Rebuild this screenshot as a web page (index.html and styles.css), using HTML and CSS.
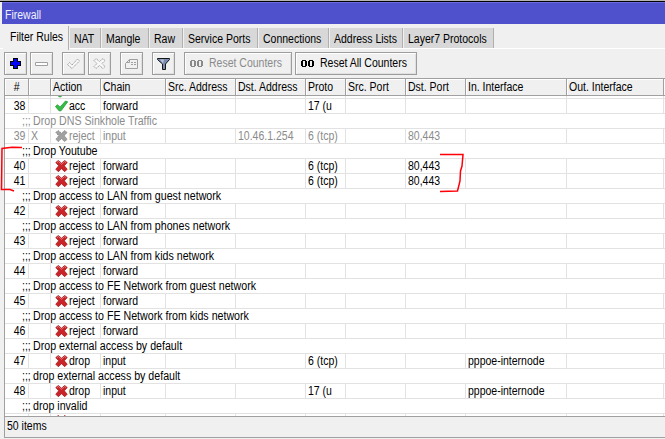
FILE: index.html
```
<!DOCTYPE html>
<html lang="en">
<head>
<meta charset="utf-8">
<title>Firewall</title>
<link rel="stylesheet" href="styles.css">
</head>
<body>
<svg class="defs" width="0" height="0">
  <symbol id="cross" viewBox="0 0 13 12"><path d="M.8 2.500 3.300.5 6.500 3.200 9.700.5 12.200 2.500 9.300 5.800 12.200 9.200 9.700 11.700 6.500 8.700 3.300 11.700.8 9.200 3.700 5.800Z" fill="#c92428" stroke="#a8171c" stroke-width=".8"/><path d="M2 2.700 3.500 1.500 6.500 4.300 9.500 1.500 11 2.700" fill="none" stroke="#e58a8c" stroke-width=".8"/></symbol>
  <symbol id="crossgray" viewBox="0 0 13 12"><path d="M.8 2.500 3.300.5 6.500 3.200 9.700.5 12.200 2.500 9.300 5.800 12.200 9.200 9.700 11.700 6.500 8.700 3.300 11.700.8 9.200 3.700 5.800Z" fill="#a0a0a0" stroke="#888" stroke-width=".9" stroke-dasharray="1.500 1"/></symbol>
  <symbol id="ok" viewBox="0 0 13 12"><path d="M.5 6.500 2.500 4.700 5 7.200 10.500 1 12.700 1.800 6 10.800 4 10.800Z" fill="#35bd45" stroke="#1f9c30" stroke-width=".8"/></symbol>
  <symbol id="zeros" viewBox="0 0 13 7"><path d="M1 0h4v1h1v5h-1v1h-4v-1h-1v-5h1ZM2 1v5h2v-5ZM8 0h4v1h1v5h-1v1h-4v-1h-1v-5h1ZM9 1v5h2v-5Z" fill="currentColor" fill-rule="evenodd" shape-rendering="crispEdges"/></symbol>
</svg>
<div class="outer"></div>
<div class="title"><span>Firewall</span></div>
<nav class="tabs">
  <div class="tab on t1"><span>Filter Rules</span></div><div class="tab t2"><span>NAT</span></div><div class="tab t3"><span>Mangle</span></div><div class="tab t4"><span>Raw</span></div><div class="tab t5"><span>Service Ports</span></div><div class="tab t6"><span>Connections</span></div><div class="tab t7"><span>Address Lists</span></div><div class="tab t8"><span>Layer7 Protocols</span></div>
</nav>
<div class="tools">
  <button class="btn"><svg width="13" height="13" shape-rendering="crispEdges"><path d="M4 1h5v3h3v5h-3v3h-5v-3h-3v-5h3Z" fill="#000"/><path d="M5 2h3v3h3v3h-3v3h-3v-3h-3v-3h3Z" fill="#0000ff"/></svg></button>
  <button class="btn g1"><svg width="13" height="13"><path d="M.5 5.500h12v3h-12Z" fill="#fff" stroke="#a0a0a0"/></svg></button>
  <button class="btn g2"><svg width="13" height="13"><path d="M.5 7.500 2.500 5.500 5 8 10.500 2 12.500 4 5 11.500Z" fill="#f8f8f8" stroke="#a0a0a0" stroke-dasharray="1.500 .6"/></svg></button>
  <button class="btn g1"><svg width="13" height="13"><path d="M1 3.500 3 1.500 6.500 4.500 10 1.500 12 3.500 9 6.500 12 9.500 10 11.500 6.500 8.500 3 11.500 1 9.500 4 6.500Z" fill="#f8f8f8" stroke="#a0a0a0" stroke-dasharray="1.500 .6"/></svg></button>
  <button class="btn g2"><svg width="13" height="13"><path d="M4.500 2.500h8v9h-12v-5ZM4.500 2.500v3h-3M6 5.500h2M9 5.500h2M6 7.500h2M9 7.500h2" fill="none" stroke="#a0a0a0"/></svg></button>
  <button class="btn g2"><svg width="13" height="13"><path d="M.5 1.500h12v1l-4 4.500v5.500h-3v-5.500l-5-4.500Z" fill="#788aad" stroke="#151515"/><path d="M3 2.500h4l-1 4Z" fill="#b4c2da"/></svg></button>
  <button class="btn wide off"><svg class="zz"><use href="#zeros"/></svg><span>Reset Counters</span></button>
  <button class="btn wide all"><svg class="zz"><use href="#zeros"/></svg><span>Reset All Counters</span></button>
</div>
<main class="table">
  <div class="row head"><i><span>#</span></i><i></i><i><span>Action</span></i><i><span>Chain</span></i><i><span>Src. Address</span></i><i><span>Dst. Address</span></i><i><span>Proto</span></i><i><span>Src. Port</span></i><i><span>Dst. Port</span></i><i><span>In. Interface</span></i><i><span>Out. Interface</span></i><i></i></div>
  <div class="rows" id="rows"></div>
  <footer><span>50 items</span></footer>
</main>
<svg class="marks" width="665" height="439"><path d="M22 147.500 12 147.200 2 148.500 1.500 189.500 10 189.500 14 191M440 154.500H463L462 166 460.500 171 460 181 457.500 191 440 191.500" fill="none" stroke="#ff0009" stroke-width="1.500"/></svg>
<script src="rows.js"></script>
</body>
</html>
```
FILE: styles.css
```
* { box-sizing: border-box; }
body { margin: 0; width: 665px; height: 439px; overflow: hidden; background: #f0f0f0; color: #000; font: 12px/15px "Liberation Sans", Arial, sans-serif; position: relative; white-space: nowrap; }
span { display: inline-block; transform: scaleX(.875); transform-origin: left center; }
.defs { position: absolute; }
.outer { height: 2px; background: #b5b5b5; border-bottom: 1px solid #000; }
.title { height: 22px; margin-left: 2px; padding: 4px 3px 0; background: #4e50cc; color: #f0f0ff; border-top: 1px solid #6b6de0; line-height: 16px; }
.tabs { display: flex; height: 25px; padding: 4px 0 0 3px; align-items: flex-start; border-bottom: 1px solid #fff; }
.tab { height: 20px; background: #d8d8d8; border-right: 1px solid #b0b0b0; margin-right: 1px; padding: 3px 0 0 4px; line-height: 16px; flex: none; }
.tab.on { height: 24px; margin-top: -2px; background: #f0f0f0; padding: 3px 0 0 7px; }
.t1 { width: 66px; } .t2 { width: 31px; } .t3 { width: 47px; } .t4 { width: 33px; } .t5 { width: 74px; } .t6 { width: 70px; } .t7 { width: 73px; } .t8 { width: 90px; }
.tools { display: flex; height: 29px; padding: 3px 0 0 4px; }
.btn { width: 23px; height: 23px; padding: 0; background: #f0f0f0; border: 1px solid #9d9d9d; box-shadow: inset 1px 1px #fff, inset -1px -1px #e0e0e0; display: flex; align-items: center; justify-content: center; font: inherit; color: #000; flex: none; }
.g1 { margin-left: 3px; }
.g2 { margin-left: 9px; }
.wide { justify-content: flex-start; padding-left: 5px; }
.zz { width: 13px; height: 7px; margin-right: 6px; flex: none; }
.off { width: 108px; margin-left: 9px; color: #8a8a8a; }
.all { width: 122px; margin-left: 3px; }
.table { margin-left: 4px; height: 360px; border: 1px solid #a0a0a0; border-right: 0; background: #fff; }
.row { display: grid; grid-template-columns: 24px 22px 50px 65px 70px 70px 40px 60px 60px 101px 97px 1fr; height: 15px; border-bottom: 1px solid #e2e2e2; }
.row i { font-style: normal; border-right: 1px solid #e2e2e2; padding-left: 2px; display: flex; align-items: center; overflow: hidden; height: 14px; }
.row i:last-child { border-right: 0; }
.row i:first-child { justify-content: flex-end; padding-right: 3px; }
.row i:first-child span { transform-origin: right center; }
.row.head { height: 17px; background: #f0f0f0; border-bottom: 1px solid #a0a0a0; }
.row.head i { height: 16px; border-color: #a0a0a0; box-shadow: inset 1px 1px #fff; }
.row.head i:first-child { justify-content: center; }
.rows { height: 320px; overflow: hidden; }
.row.part { height: 3px; }
.row.part i { height: 2px; align-items: flex-end; }
.note { height: 15px; border-bottom: 1px solid #e2e2e2; padding-left: 17px; line-height: 15px; display: flex; }
.note .mark { width: 11px; }
.note .text { transform: scaleX(.887); }
.dim { color: #8b8b8b; }
.ico { width: 13px; height: 12px; margin: 0 1px 0 2px; flex: none; }
footer { height: 21px; border-top: 1px solid #a0a0a0; background: #f0f0f0; padding: 1px 2px; line-height: 16px; }
.marks { position: absolute; left: 0; top: 0; }
```
FILE: rows.js
```
const rules = [
  [38, '', 'ok', 'acc', 'forward', '', '17 (u', '', ''],
  'Drop DNS Sinkhole Traffic',
  [39, 'X', 'crossgray', 'reject', 'input', '10.46.1.254', '6 (tcp)', '80,443', ''],
  'Drop Youtube',
  [40, '', 'cross', 'reject', 'forward', '', '6 (tcp)', '80,443', ''],
  [41, '', 'cross', 'reject', 'forward', '', '6 (tcp)', '80,443', ''],
  'Drop access to LAN from guest network',
  [42, '', 'cross', 'reject', 'forward', '', '', '', ''],
  'Drop access to LAN from phones network',
  [43, '', 'cross', 'reject', 'forward', '', '', '', ''],
  'Drop access to LAN from kids network',
  [44, '', 'cross', 'reject', 'forward', '', '', '', ''],
  'Drop access to FE Network from guest network',
  [45, '', 'cross', 'reject', 'forward', '', '', '', ''],
  'Drop access to FE Network from kids network',
  [46, '', 'cross', 'reject', 'forward', '', '', '', ''],
  'Drop external access by default',
  [47, '', 'cross', 'drop', 'input', '', '6 (tcp)', '', 'pppoe-internode'],
  'drop external access by default',
  [48, '', 'cross', 'drop', 'input', '', '17 (u', '', 'pppoe-internode'],
  'drop invalid'
];
const icon = name => `<svg class="ico"><use href="#${name}"/></svg>`;
const cell = (text, before = '') => `<i>${before}${text === '' ? '' : `<span>${text}</span>`}</i>`;
let html = '<div class="row part"><i></i><i></i>' + cell('', icon('ok')) + '<i></i>'.repeat(9) + '</div>';
for (const r of rules) {
  if (typeof r === 'string') {
    html += `<div class="note${r.includes('DNS') ? ' dim' : ''}"><span class="mark">;;;</span><span class="text">${r}</span></div>`;
  } else {
    const [n, flag, ic, action, chain, dst, proto, port, inp] = r;
    html += `<div class="row${flag ? ' dim' : ''}">` + cell(n) + cell(flag) + cell(action, icon(ic)) +
      [chain, '', dst, proto, '', port, inp, '', ''].map(t => cell(t)).join('') + '</div>';
  }
}
html += '<div class="row"><i></i><i></i>' + cell('', icon('cross')) + '<i></i>'.repeat(9) + '</div>';
document.getElementById('rows').innerHTML = html;
```
